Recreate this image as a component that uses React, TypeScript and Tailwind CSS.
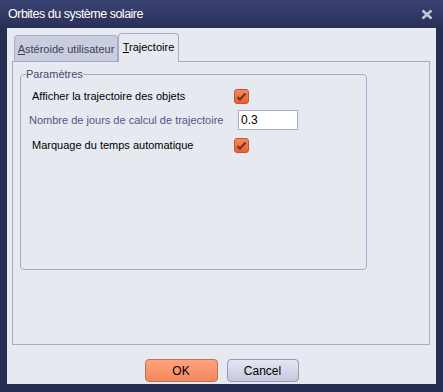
import React from 'react';

const font = { fontFamily: '"Liberation Sans", Arial, sans-serif' };

function Check() {
    return (
        <div className="flex h-[15px] w-[15px] items-center justify-center rounded-[3px] border border-[#c9532c] bg-gradient-to-b from-[#f58a5c] to-[#e5602f]">
            <svg width="11" height="9" viewBox="0 0 11 9">
                <path d="M1.5 5 L4 7.5 L9.5 1.5" stroke="#6e3324" strokeWidth="2" fill="none" />
            </svg>
        </div>
    );
}

export default function App() {
    return (
        <div className="flex h-[392px] w-[443px] flex-col bg-[#262d52] text-[11px] text-black" style={font}>
            {/* title bar */}
            <div className="flex h-[28px] items-center justify-between bg-gradient-to-b from-[#3b4373] to-[#293057] pl-[8px] pr-[10px]">
                <span className="text-[12.5px] tracking-[-0.5px] text-white">Orbites du système solaire</span>
                <svg width="12" height="11" viewBox="0 0 12 11">
                    <path d="M1.5 1.5 L10.5 9.5 M10.5 1.5 L1.5 9.5" stroke="#c3c6d8" strokeWidth="2.6" />
                </svg>
            </div>

            {/* client */}
            <div className="mx-[7px] mb-[8px] flex flex-1 flex-col bg-[#e6e9f0]">
                {/* tabs */}
                <div className="flex h-[33px] items-end pl-[7px] pt-[5px]">
                    <div className="-mb-px flex h-[27px] w-[104px] items-center justify-center rounded-t-[4px] border border-b-0 border-[#a7abcb] bg-[#c9cde0] text-[#3d3f55]">
                        <span><span className="underline">A</span>stéroide utilisateur</span>
                    </div>
                    <div className="relative z-10 -mb-px flex h-[29px] w-[61px] items-center justify-center rounded-t-[4px] border border-b-0 border-[#a7abcb] bg-[#e6e9f0] pb-[2px]">
                        <span><span className="underline">T</span>rajectoire</span>
                    </div>
                </div>

                {/* tab page */}
                <div className="ml-[5px] mr-[6px] h-[284px] border border-[#a7abcb] px-[7px] pt-[4px]">
                    <fieldset className="h-[204px] w-[347px] rounded-[4px] border border-[#a7abcb] p-0">
                        <legend className="ml-[5px] text-[#44496e]">Paramètres</legend>
                        <div className="flex h-[25px] items-center whitespace-nowrap pl-[11px] pt-[3px]">
                            <span className="w-[202px]">Afficher la trajectoire des objets</span>
                            <Check />
                        </div>
                        <div className="flex h-[25px] items-center whitespace-nowrap pl-[8px]">
                            <span className="w-[209px] text-[#50568a]">Nombre de jours de calcul de trajectoire</span>
                            <div className="flex h-[20px] w-[60px] items-center border border-[#a7abcb] bg-white px-[2px] text-[12px]">0.3</div>
                        </div>
                        <div className="flex h-[25px] items-center whitespace-nowrap pl-[11px]">
                            <span className="w-[202px]">Marquage du temps automatique</span>
                            <Check />
                        </div>
                    </fieldset>
                </div>

                {/* buttons */}
                <div className="flex flex-1 items-start justify-center gap-[9px] pt-[14px]">
                    <button className="h-[23px] w-[73px] rounded-[4px] border border-[#c2705a] bg-gradient-to-b from-[#ffa27e] to-[#f5875d] text-[12px]">OK</button>
                    <button className="h-[23px] w-[72px] rounded-[4px] border border-[#9397b8] bg-gradient-to-b from-[#e4e6f1] to-[#c6c9dd] text-[12px]">Cancel</button>
                </div>
            </div>
        </div>
    );
}
